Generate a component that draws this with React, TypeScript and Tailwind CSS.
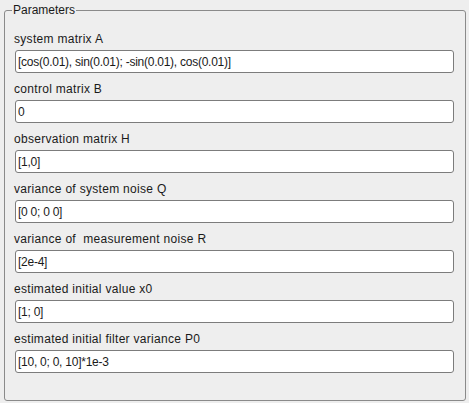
import React from "react";

const fields: { label: string; value: string }[] = [
  { label: "system matrix A", value: "[cos(0.01), sin(0.01); -sin(0.01), cos(0.01)]" },
  { label: "control matrix B", value: "0" },
  { label: "observation matrix H", value: "[1,0]" },
  { label: "variance of system noise Q", value: "[0 0; 0 0]" },
  { label: "variance of  measurement noise R", value: "[2e-4]" },
  { label: "estimated initial value x0", value: "[1; 0]" },
  { label: "estimated initial filter variance P0", value: "[10, 0; 0, 10]*1e-3" },
];

export default function App() {
  return (
    <div
      className="w-[469px] h-[403px] bg-[#eeeeee] overflow-hidden text-[12px] text-[#1a1a1a]"
      style={{ fontFamily: '"Liberation Sans", Arial, sans-serif' }}
    >
      <div className="relative ml-[4px] mt-[10px] w-[462px] h-[391px] border border-[#8a8a8a] rounded-[3px]">
        <span className="absolute left-[7px] top-[-8px] px-[1px] bg-[#eeeeee] leading-[14px] whitespace-pre">
          Parameters
        </span>
        <div className="flex flex-col gap-[9px] pt-[21px] pl-[9px]">
          {fields.map((f) => (
            <div key={f.label} className="flex flex-col gap-[4px]">
              <div className="h-[14px] leading-[14px] whitespace-pre tracking-[0.3px]">{f.label}</div>
              <div className="ml-[1px] w-[439px] h-[23px] bg-white border border-[#7c7c7c] rounded-[3px] pl-[2px] flex items-center leading-[14px] whitespace-pre tracking-[-0.25px]">
                {f.value}
              </div>
            </div>
          ))}
        </div>
      </div>
    </div>
  );
}
